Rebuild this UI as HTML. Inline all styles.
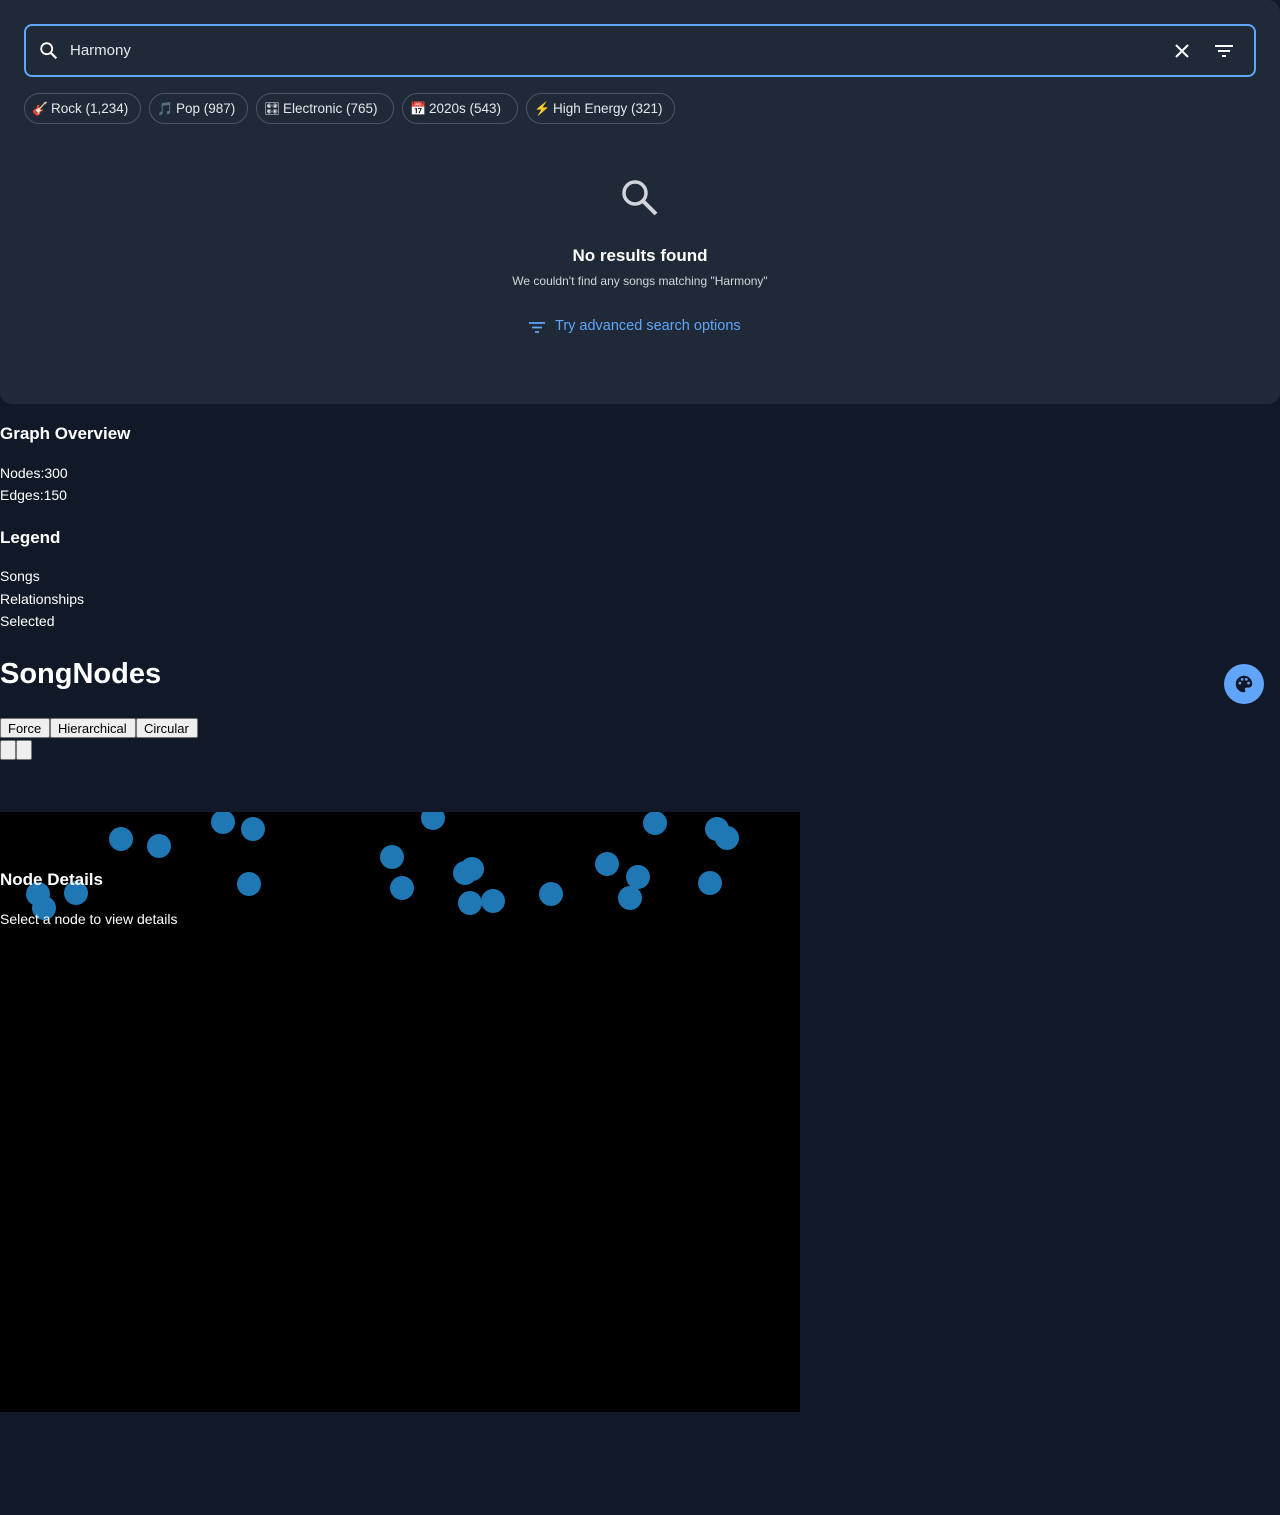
<!DOCTYPE html>
<html><head><style>
body{margin:0;background:#111827;font-family:"Liberation Sans",sans-serif;color:#fff;width:1280px;height:1515px;position:relative;overflow:hidden}
.panel{position:absolute;left:0;top:0;width:1280px;height:404px;background:#1f2937;border-radius:0 12px 12px 12px}
.search{position:absolute;left:24px;top:24px;width:1228px;height:49px;border:2px solid #60a5fa;border-radius:8px;background:#1f2937}
.chip{position:absolute;top:93px;height:31px;border:1px solid #4b5563;border-radius:16px;font-size:13.5px;line-height:30px;padding:0 0 0 26px;color:#e5e7eb;box-sizing:border-box;white-space:nowrap;overflow:hidden}
.chip span{position:absolute;left:7px;top:0;font-size:13px}
.t{position:absolute;left:0;white-space:nowrap}
.btn{position:absolute;top:718px;height:20px;background:#efefef;border:1px solid #767676;border-radius:2px;color:#000;font-size:13px;line-height:19px;padding:0 7px;box-sizing:border-box;white-space:nowrap}
.c{position:absolute;width:24px;height:24px;border-radius:50%;background:#1f77b4}
</style></head><body>
<div class="panel">
<div class="search">
<svg style="position:absolute;left:12px;top:14px" width="22" height="22" viewBox="0 0 24 24"><circle cx="9.5" cy="9.5" r="6" fill="none" stroke="#fff" stroke-width="2"/><path d="M14 14l6 6" stroke="#fff" stroke-width="2.4"/></svg>
<div style="position:absolute;left:44px;top:16px;font-size:15px;color:#e5e7eb">Harmony</div>
<svg style="position:absolute;left:1148px;top:17px" width="16" height="16" viewBox="0 0 16 16"><path d="M2 2l12 12M14 2L2 14" stroke="#fff" stroke-width="2"/></svg>
<svg style="position:absolute;left:1188px;top:17px" width="20" height="16" viewBox="0 0 20 16"><path d="M1 3h18M4 8h12M8 13h4" stroke="#fff" stroke-width="2"/></svg>
</div>
<div class="chip" style="left:24px;width:117px"><span>🎸</span>Rock (1,234)</div>
<div class="chip" style="left:149px;width:99px"><span>🎵</span>Pop (987)</div>
<div class="chip" style="left:256px;width:138px"><span>🎛</span>Electronic (765)</div>
<div class="chip" style="left:402px;width:116px"><span>📅</span>2020s (543)</div>
<div class="chip" style="left:526px;width:149px"><span style="color:#facc15">⚡</span>High Energy (321)</div>
<svg style="position:absolute;left:620px;top:178px" width="38" height="38" viewBox="0 0 38 38"><circle cx="15" cy="15" r="11" fill="none" stroke="#d1d5db" stroke-width="3.5"/><path d="M23 23l13 13" stroke="#d1d5db" stroke-width="4"/></svg>
<div class="t" style="width:1280px;text-align:center;top:246px;font-size:17px;font-weight:bold">No results found</div>
<div class="t" style="width:1280px;text-align:center;top:274px;font-size:12px;color:#d1d5db">We couldn't find any songs matching "Harmony"</div>
<svg style="position:absolute;left:528px;top:321px" width="18" height="13" viewBox="0 0 18 13"><path d="M1 2h16M4 6.5h10M7 11h4" stroke="#60a5fa" stroke-width="1.8"/></svg>
<div class="t" style="left:555px;top:318px;font-size:14.5px;color:#60a5fa">Try advanced search options</div>
</div>
<div class="t" style="top:424px;font-size:17px;font-weight:bold">Graph Overview</div>
<div class="t" style="top:465px;font-size:14px">Nodes:300</div>
<div class="t" style="top:487px;font-size:14px">Edges:150</div>
<div class="t" style="top:528px;font-size:17px;font-weight:bold">Legend</div>
<div class="t" style="top:568px;font-size:14px">Songs</div>
<div class="t" style="top:591px;font-size:14px">Relationships</div>
<div class="t" style="top:613px;font-size:14px">Selected</div>
<div class="t" style="top:658px;font-size:29px;font-weight:bold">SongNodes</div>
<div style="position:absolute;left:1224px;top:664px;width:40px;height:40px;border-radius:50%;background:#60a5fa"></div>
<svg style="position:absolute;left:1233px;top:673px" width="22" height="22" viewBox="0 0 24 24"><path d="M12 3a9 9 0 0 0 0 18c1 0 1.5-.7 1.5-1.5 0-.8-.6-1.2-.6-2 0-.9.7-1.5 1.6-1.5H17a4 4 0 0 0 4-4c0-5-4-9-9-9z" fill="#111827"/><circle cx="7.5" cy="11" r="1.5" fill="#60a5fa"/><circle cx="10" cy="7" r="1.5" fill="#60a5fa"/><circle cx="14.5" cy="7" r="1.5" fill="#60a5fa"/><circle cx="17" cy="11" r="1.5" fill="#60a5fa"/></svg>
<div class="btn" style="left:0;width:50px">Force</div>
<div class="btn" style="left:50px;width:86px">Hierarchical</div>
<div class="btn" style="left:136px;width:62px">Circular</div>
<div class="btn" style="left:0;top:740px;width:16px"></div>
<div class="btn" style="left:16px;top:740px;width:16px"></div>
<div style="position:absolute;left:0;top:812px;width:800px;height:600px;background:#000;overflow:hidden">
<div class="c" style="left:109px;top:15px"></div><div class="c" style="left:147px;top:22px"></div>
<div class="c" style="left:211px;top:-2px"></div><div class="c" style="left:241px;top:5px"></div>
<div class="c" style="left:421px;top:-6px"></div><div class="c" style="left:643px;top:-1px"></div>
<div class="c" style="left:705px;top:5px"></div><div class="c" style="left:715px;top:14px"></div>
<div class="c" style="left:380px;top:33px"></div><div class="c" style="left:237px;top:60px"></div>
<div class="c" style="left:390px;top:64px"></div><div class="c" style="left:453px;top:49px"></div>
<div class="c" style="left:460px;top:45px"></div><div class="c" style="left:458px;top:79px"></div>
<div class="c" style="left:481px;top:77px"></div><div class="c" style="left:539px;top:70px"></div>
<div class="c" style="left:595px;top:40px"></div><div class="c" style="left:626px;top:53px"></div>
<div class="c" style="left:618px;top:74px"></div><div class="c" style="left:698px;top:59px"></div>
<div class="c" style="left:26px;top:70px"></div><div class="c" style="left:32px;top:84px"></div>
<div class="c" style="left:64px;top:69px"></div>
</div>
<div class="t" style="top:870px;font-size:17px;font-weight:bold">Node Details</div>
<div class="t" style="top:911px;font-size:14px">Select a node to view details</div>
</body></html>
